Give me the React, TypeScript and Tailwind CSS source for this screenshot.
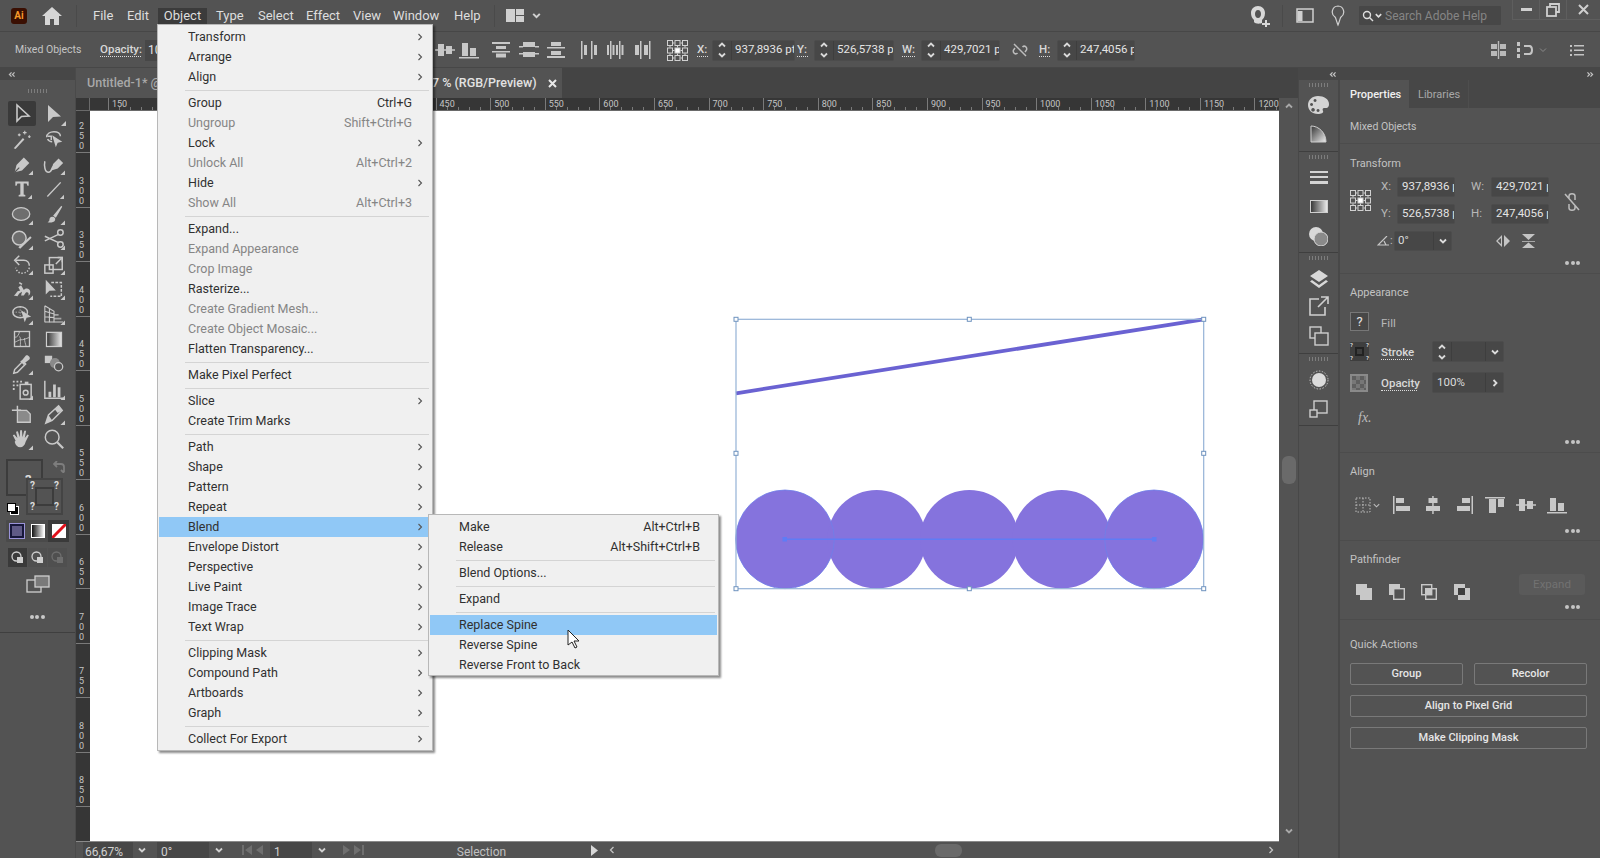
import React from "react";

type P = { children?: React.ReactNode; c?: boolean; s?: number; className?: string };
const Ico = ({ children, c, s = 24, className = "" }: P) => (
  <svg width={s} height={s} viewBox="0 0 24 24" fill="currentColor" className={"shrink-0 " + className}>
    {children}
    {c && <path d="M24 19v5h-5z" />}
  </svg>
);
const St = { fill: "none", stroke: "currentColor", strokeWidth: 1.6 } as const;

const Chev = ({ dir = "down", s = 10, w = 1.8, className = "" }: { dir?: string; s?: number; w?: number; className?: string }) => {
  const d = dir === "down" ? "M2 3.5 5 6.5 8 3.5" : dir === "up" ? "M2 6.5 5 3.5 8 6.5" : dir === "left" ? "M6.5 2 3.5 5 6.5 8" : "M3.5 2 6.5 5 3.5 8";
  return (
    <svg width={s} height={s} viewBox="0 0 10 10" fill="none" stroke="currentColor" strokeWidth={w} className={"shrink-0 " + className}>
      <path d={d} />
    </svg>
  );
};

const tools: [React.ReactNode, React.ReactNode][] = [
  [
    <Ico><path d="M7 3v16l4.500-4.500 7.500-.5z" {...St} /></Ico>,
    <Ico c><path d="M6 3v17l5-5 8-.5z" /></Ico>,
  ],
  [
    <Ico s={22}><path d="M3 22 13 11l1.600 1.600L5 23z" /><path d="M15 3v4M13 5h4M20 8v3M18.500 9.500h3M9 6v3M7.500 7.500h3" {...St} strokeWidth={1.2} /></Ico>,
    <Ico s={22}><path d="M4 10c0-4 4-6 8-6s7 2 7 5" {...St} /><path d="M5 12c1 2 3 3 5 3M5 9h4v4" {...St} /><path d="M10 8l11 7-5 1-2 5z" /></Ico>,
  ],
  [
    <Ico s={22} c><path d="M4 21l2-8 8-8 6 6-8 8z" /><path d="M4 21l5-5" stroke="#535353" strokeWidth="1.200" /></Ico>,
    <Ico s={22} c><path d="M9 19l2-7 6-6 5 5-6 6z" /><path d="M2 9c-1 5 0 12 4 12s3-5 5-6" {...St} /></Ico>,
  ],
  [
    <Ico s={20} c><path d="M4 3h16v5h-1.500l-1-2.500H14v13l2 .7V21H8v-1.800l2-.7v-13H6.500l-1 2.500H4z" /></Ico>,
    <Ico s={20} c><path d="M4 21 20 4" {...St} /></Ico>,
  ],
  [
    <Ico s={22} c><ellipse cx="11" cy="12" rx="9.500" ry="7" fill="#6e6e6e" stroke="currentColor" strokeWidth="1.400" /></Ico>,
    <Ico s={22} c><path d="M11 14 20 3l1 1-7 12zM10 15c3 0 4 2 3 4s-5 3-8 2c2-1 2-2 2-3s1-3 3-3z" /></Ico>,
  ],
  [
    <Ico s={22} c><circle cx="9" cy="11" r="7.500" fill="#6e6e6e" stroke="currentColor" strokeWidth="1.600" /><path d="M8 21l13-12 1.500 1.500L10 22.500z" /></Ico>,
    <Ico s={22} c><circle cx="19" cy="5" r="3" {...St} /><circle cx="19" cy="18" r="3" {...St} /><path d="M2 9l15 7M2 14l15-7" {...St} /></Ico>,
  ],
  [
    <Ico s={22} c><path d="M5 8h9c4 0 6 3 6 6" {...St} /><path d="M9 3 4 8l5 5" {...St} /><path d="M20 16c-1 4-4 6-8 6s-6-3-7-6" {...St} strokeDasharray="1.500 1.800" /></Ico>,
    <Ico s={22} c><rect x="2" y="13" width="9" height="9" {...St} /><rect x="7" y="5" width="14" height="13" {...St} /><path d="M14 12l6-6M16 5h5v5" {...St} /></Ico>,
  ],
  [
    <Ico s={22} c><path d="M3 19c3-1 3-6 7-5l-2-4 3-2 3 5c3-3 7-1 7 2s-1 4-2 4c1-3-1-4-3-3l-2 3h-3l1-4-3 2-2 3z" /><path d="M9 5l3 2" {...St} /></Ico>,
    <Ico s={22} c><path d="M3 2v16l4-4 7-.5z" /><path d="M9 5h11v15H8" {...St} strokeDasharray="3 1.500" /></Ico>,
  ],
  [
    <Ico s={22} c><ellipse cx="10" cy="10" rx="8" ry="6" {...St} /><path d="M2 10h14M10 4v12" {...St} strokeWidth={0.8} strokeDasharray="1.500 1.500" /><path d="M11 8l11 7-5 1-2 5z" /></Ico>,
    <Ico s={22} c><path d="M2 3v18M2 3l10 6v12M2 9l10 3M2 15l10 1M7 6v15" {...St} strokeWidth={1.2} /><path d="M12 12h5v2h-5zM12 16h8v2h-8zM2 20h20v1.500H2z" opacity=".7" /></Ico>,
  ],
  [
    <Ico s={20}><rect x="3" y="3" width="18" height="18" {...St} /><path d="M3 10c4 0 5-3 6-7M9 9c2 3 1 5 1 12M10 13c4 0 6-1 11-3M15 11c0 4 1 6 2 10M3 16c3-1 5-3 7-3" {...St} strokeWidth={1} /></Ico>,
    <Ico s={20}>
      <defs><linearGradient id="tg"><stop offset="0" stopColor="#333" /><stop offset="1" stopColor="#e8e8e8" /></linearGradient></defs>
      <rect x="3" y="4" width="18" height="17" fill="url(#tg)" stroke="#cfcfcf" strokeWidth="1.500" />
    </Ico>,
  ],
  [
    <Ico s={22} c><path d="M3 22l1-4 9-9 3 3-9 9z" {...St} /><path d="M12 8l4-5c2-2 6 2 4 4l-5 4 1 1-2 1-4-4z" /></Ico>,
    <Ico s={22}><rect x="2" y="3" width="8" height="8" /><circle cx="13" cy="11" r="5.500" fill="#8a8a8a" /><circle cx="17" cy="15" r="4.500" fill="#535353" stroke="currentColor" strokeWidth="1.400" /></Ico>,
  ],
  [
    <Ico s={22} c><path d="M2 3h2v2H2zM6 3h2v2H6zM10 3h2v2h-2zM2 7h2v2H2zM6 7h2v2H6zM2 11h2v2H2z" /><path d="M15 4h4v3h-4z" /><rect x="10" y="7" width="12" height="16" {...St} /><circle cx="16" cy="16" r="2.600" {...St} /></Ico>,
    <Ico s={22} c><path d="M2 3v19h20" {...St} /><path d="M6 15h3v6H6zM11 7h3v14h-3zM16 10h3v11h-3z" /></Ico>,
  ],
  [
    <Ico s={22}><path d="M1 8h10M7 3v5" {...St} /><path d="M7 8h10l4 4v9H7z" fill="#8a8a8a" stroke="currentColor" strokeWidth="1.400" /></Ico>,
    <Ico s={22} c><path d="M3 22l3-9L17 3l4 5-11 11z" {...St} /><path d="M6 13l4 6-7 3zM17 3l4 5-5 3-3-4z" /></Ico>,
  ],
  [
    <Ico s={22} c><path d="M5 14 2 8l1.500-1L7 11 5.500 4 7.500 3.500 9.500 10 10 2.500h2l.5 7.500 2-7h2l-1.500 8 3-4 1.500 1-3.500 7c-1 4-3 6-6 6s-5-2-6-6z" /></Ico>,
    <Ico s={22}><circle cx="10" cy="10" r="7.500" {...St} /><path d="M15.500 15.500 22 22" {...St} strokeWidth={2.400} /></Ico>,
  ],
];

const Grip = () => <div className="h-[4px] w-[20px] mx-auto bg-[repeating-linear-gradient(90deg,#7d7d7d_0,#7d7d7d_1px,transparent_1px,transparent_3px)]" />;

const Dots = ({ className = "" }: { className?: string }) => (
  <div className={"flex justify-end gap-[1.500px] pr-[20px] " + className}>
    <span className="w-[4px] h-[4px] rounded-full bg-[#c4c4c4]" />
    <span className="w-[4px] h-[4px] rounded-full bg-[#c4c4c4]" />
    <span className="w-[4px] h-[4px] rounded-full bg-[#c4c4c4]" />
  </div>
);

const RefGrid = ({ s = 21 }: { s?: number }) => (
  <svg width={s} height={s} viewBox="0 0 21 21" fill="none" stroke="#d0d0d0" strokeWidth="1" className="shrink-0">
    {[0, 7.5, 15].map((x) => [0, 7.5, 15].map((y) => <rect key={x + "-" + y} x={x + 0.5} y={y + 0.5} width="5" height="5" fill={x === 7.5 && y === 7.5 ? "#fff" : "none"} />))}
    <path d="M6 3h1.500M13.500 3H15M6 10.500h1.500M13.500 10.500H15M6 18h1.500M13.500 18H15M3 6v1.500M3 13.500V15M10.500 6v1.500M10.500 13.500V15M18 6v1.500M18 13.500V15" />
  </svg>
);

const Al = ({ k, className = "" }: { k: string; className?: string }) => {
  const m: Record<string, string> = {
    left: "M1 1h1.500v18H1zM4 3h8v5H4zM4 11h14v5H4z",
    hcenter: "M9.200 1h1.500v18H9.200zM5.500 3h9v5h-9zM3 11h14v5H3z",
    right: "M17.500 1H19v18h-1.500zM8 3h8v5H8zM3 11h13v5H3z",
    top: "M0 2h20v1.500H0zM4 4h7v14H4zM13 4h6v8h-6z",
    vmid: "M0 9.200h20v1.500H0zM3 4h6v12H3zM11 6h6v8h-6z",
    bottom: "M0 17h20v1.500H0zM3 3h6v13H3zM11 8h6v8h-6z",
    dt: "M1 2h18v2H1zM5 6h10v3H5zM1 11h18v1.500H1zM5 13.500h10v4H5z",
    dm: "M4 2h12v5H4zM0 6h4v1.500H0zM16 6h4v1.500h-4zM4 12h12v5H4zM0 13h4v1.500H0zM16 13h4v1.500h-4z",
    db: "M5 2h10v4H5zM1 7h18v1.500H1zM5 11h10v4H5zM1 16h18v2H1z",
    vl: "M2 1h1.500v18H2zM5 5h3v10H5zM12 1h1.500v18H12zM15 5h3v10h-3z",
    vc: "M5 1h1.500v18H5zM2 5h2v10H2zM7.500 5h2v10h-2zM14 1h1.500v18H14zM11 5h2v10h-2zM16.500 5h2v10h-2z",
    vr: "M8 1h1.500v18H8zM3 5h4v10H3zM17 1h1.500v18H17zM12 5h4v10h-4z",
  };
  return <svg width="20" height="20" viewBox="0 0 20 20" fill="#c8c8c8" className={"shrink-0 " + className}><path d={m[k]} /></svg>;
};

const Stepper = () => (
  <div className="flex flex-col items-center justify-center shrink-0 border-r border-[#3e3e3e] text-[#d8d8d8] h-full w-[19px]">
    <Chev dir="up" s={10} />
    <Chev dir="down" s={10} />
  </div>
);

const NumField = ({ v, cls }: { v: string; cls: string }) => (
  <div className={"flex items-center h-[21px] bg-[#474747] rounded-[2px] overflow-hidden shrink-0 border border-[#4c4c4c] " + cls}>
    <Stepper />
    <span className="pl-[3px] text-[11.5px] text-[#e4e4e4] whitespace-nowrap overflow-hidden">{v}</span>
  </div>
);

const Dotted = ({ children, cls = "" }: { children: React.ReactNode; cls?: string }) => (
  <span className={"border-b border-dotted border-[#dcdcdc] leading-[13px] text-[11.5px] font-medium text-[#d8d8d8] shrink-0 whitespace-nowrap " + cls}>{children}</span>
);

type MI = { t: string; s?: string; a?: boolean; d?: boolean; h?: boolean } | "-";
const mainMenu: MI[] = [
  { t: "Transform", a: true }, { t: "Arrange", a: true }, { t: "Align", a: true }, "-",
  { t: "Group", s: "Ctrl+G" }, { t: "Ungroup", s: "Shift+Ctrl+G", d: true }, { t: "Lock", a: true },
  { t: "Unlock All", s: "Alt+Ctrl+2", d: true }, { t: "Hide", a: true }, { t: "Show All", s: "Alt+Ctrl+3", d: true }, "-",
  { t: "Expand..." }, { t: "Expand Appearance", d: true }, { t: "Crop Image", d: true }, { t: "Rasterize..." },
  { t: "Create Gradient Mesh...", d: true }, { t: "Create Object Mosaic...", d: true }, { t: "Flatten Transparency..." }, "-",
  { t: "Make Pixel Perfect" }, "-",
  { t: "Slice", a: true }, { t: "Create Trim Marks" }, "-",
  { t: "Path", a: true }, { t: "Shape", a: true }, { t: "Pattern", a: true }, { t: "Repeat", a: true }, { t: "Blend", a: true, h: true },
  { t: "Envelope Distort", a: true }, { t: "Perspective", a: true }, { t: "Live Paint", a: true }, { t: "Image Trace", a: true }, { t: "Text Wrap", a: true }, "-",
  { t: "Clipping Mask", a: true }, { t: "Compound Path", a: true }, { t: "Artboards", a: true }, { t: "Graph", a: true }, "-",
  { t: "Collect For Export", a: true },
];
const subMenu: MI[] = [
  { t: "Make", s: "Alt+Ctrl+B" }, { t: "Release", s: "Alt+Shift+Ctrl+B" }, "-", { t: "Blend Options..." }, "-", { t: "Expand" }, "-",
  { t: "Replace Spine", h: true }, { t: "Reverse Spine" }, { t: "Reverse Front to Back" },
];

const Menu = ({ items, cls, textPl, rightPr }: { items: MI[]; cls: string; textPl: string; rightPr: string }) => (
  <div className={"absolute bg-[#f0f0f0] border border-[#b8b8b8] shadow-[2px_2px_2px_rgba(0,0,0,0.45)] pt-[2px] pb-[1px] px-[1px] text-[12.5px] " + cls}>
    {items.map((m, i) =>
      m === "-" ? (
        <div key={i} className="h-[6px] flex items-center pl-[26px] pr-[2px]"><div className="h-[1px] w-full bg-[#d4d4d4]" /></div>
      ) : (
        <div key={i} className={"h-[20px] flex items-center " + textPl + " " + (m.h ? "bg-[#90c8f6] " : "") + (m.d ? "text-[#858585]" : "text-[#303030]")}>
          <span className="whitespace-nowrap">{m.t}</span>
          <span className={"ml-auto whitespace-nowrap " + rightPr}>{m.s}</span>
          {m.a && <Chev dir="right" s={10} w={1.1} className="text-[#555] mr-[6px]" />}
        </div>
      )
    )}
  </div>
);

const hr = [150, 200, 250, 300, 350, 400, 450, 500, 550, 600, 650, 700, 750, 800, 850, 900, 950, 1000, 1050, 1100, 1150, 1200];
const vr = [300, 350, 400, 450, 500, 550, 600, 650, 700, 750, 800, 850];

const Btn = ({ children, cls = "" }: { children: React.ReactNode; cls?: string }) => (
  <div className={"h-[22px] flex items-center justify-center border border-[#797979] rounded-[2px] text-[11px] font-medium text-[#e6e6e6] " + cls}>{children}</div>
);

const PanelLabel = ({ children, cls = "" }: { children: React.ReactNode; cls?: string }) => (
  <div className={"h-[14px] leading-[14px] text-[11px] text-[#c2c2c2] pl-[10px] " + cls}>{children}</div>
);

const PField = ({ v }: { v: string }) => (
  <div className="w-[58px] h-[20px] bg-[#474747] rounded-[2px] border border-[#4c4c4c] flex items-center pl-[4px] text-[11.5px] text-[#e4e4e4] overflow-hidden whitespace-nowrap shrink-0">{v}</div>
);

const Q = ({ cls }: { cls: string }) => <span className={"text-[10px] font-bold text-[#dcdcdc] leading-none absolute " + cls}>?</span>;

export default function App() {
  return (
    <div className="relative w-[1600px] h-[858px] overflow-hidden flex flex-col bg-[#535353] select-none font-['Roboto','Noto_Sans',sans-serif]">
      {/* Menu bar */}
      <div className="h-[32px] shrink-0 flex items-center bg-[#535353] border-b border-[#474747] text-[13px] text-[#dedede]">
        <div className="ml-[11px] w-[16px] h-[16px] rounded-[3px] bg-[#3a0f02] flex items-center justify-center text-[10px] font-bold text-[#f79a2a] leading-none">Ai</div>
        <svg width="20" height="18" viewBox="0 0 20 18" fill="#d6d6d6" className="ml-[15px] shrink-0"><path d="M10 0 20 9h-3v9h-5v-6H8v6H3V9H0z" /></svg>
        <div className="ml-[14px] w-px h-[22px] bg-[#4a4a4a]" />
        <span className="ml-[16px] w-[34px] shrink-0">File</span>
        <span className="w-[31px] shrink-0">Edit</span>
        <span className="h-[16px] leading-[16px] w-[49px] shrink-0 bg-[#3b3b3b] text-center">Object</span>
        <span className="ml-[9px] w-[42px] shrink-0">Type</span>
        <span className="w-[48px] shrink-0">Select</span>
        <span className="w-[47px] shrink-0">Effect</span>
        <span className="w-[40px] shrink-0">View</span>
        <span className="w-[61px] shrink-0">Window</span>
        <span className="w-[40px] shrink-0">Help</span>
        <div className="w-px h-[22px] bg-[#4a4a4a]" />
        <svg width="18" height="13" viewBox="0 0 18 13" fill="#d0d0d0" className="ml-[11px] shrink-0"><path d="M0 0h9v13H0zM10 0h8v6h-8zM10 7h8v6h-8z" /></svg>
        <Chev s={11} className="ml-[7px] text-[#d0d0d0]" />
        <div className="ml-auto flex items-center h-full">
          <svg width="22" height="22" viewBox="0 0 22 22" fill="#d8d8d8" className="shrink-0"><path d="M9 1c4 0 7 3 7 7s-2 6-3 7v3c-2 1-7 1-8-1v-2C3 13 2 11 2 8c0-4 3-7 7-7zm0 4c-2 0-3 2-3 4s1 4 3 4 3-2 3-4-1-4-3-4z" /><path d="M16 15h2v3h3v2h-3v2h-2v-2h-3v-2h3z" /></svg>
          <div className="ml-[11px] w-px h-[22px] bg-[#4a4a4a]" />
          <svg width="18" height="15" viewBox="0 0 18 15" fill="none" stroke="#d0d0d0" strokeWidth="1.500" className="ml-[13px] shrink-0"><rect x="1" y="1" width="16" height="13" /><rect x="1.5" y="3" width="5" height="10" fill="#d0d0d0" stroke="none" /></svg>
          <svg width="14" height="22" viewBox="0 0 14 22" fill="none" stroke="#d0d0d0" strokeWidth="1.200" className="ml-[17px] shrink-0"><path d="M7 1a6 6 0 0 0-3 11c1 1 1 3 3 8 2-5 2-7 3-8A6 6 0 0 0 7 1z" /></svg>
          <div className="ml-[14px] w-[142px] h-[19px] bg-[#474747] rounded-[1px] flex items-center pl-[3px] text-[12px] text-[#858585]">
            <svg width="12" height="12" viewBox="0 0 12 12" fill="none" stroke="#dedede" strokeWidth="1.400" className="shrink-0"><circle cx="5" cy="5" r="3.500" /><path d="M7.500 7.500 11 11" /></svg>
            <Chev s={9} className="text-[#dedede]" />
            <span className="ml-[2px] whitespace-nowrap">Search Adobe Help</span>
          </div>
          <div className="ml-[11px] flex h-[20px] self-start text-[#cfcfcf] border-b border-[#5e5e5e]">
            <div className="w-[28px] flex items-center justify-center border-x border-[#5e5e5e]"><span className="w-[11px] h-[3px] bg-[#cfcfcf]" /></div>
            <div className="w-[27px] flex items-center justify-center border-r border-[#5e5e5e]"><svg width="14" height="14" viewBox="0 0 14 14" fill="none" stroke="#cfcfcf" strokeWidth="1.800"><path d="M4 4V1h9v8h-3" /><rect x="1" y="4" width="9" height="9" /></svg></div>
            <div className="w-[33px] flex items-center justify-center"><svg width="11" height="11" viewBox="0 0 11 11" stroke="#cfcfcf" strokeWidth="2"><path d="M1 1l9 9M10 1l-9 9" /></svg></div>
          </div>
        </div>
      </div>

      {/* Control bar */}
      <div className="h-[36px] shrink-0 flex items-center pt-[1px] bg-[#535353] border-b border-[#474747] text-[12px] text-[#c8c8c8]">
        <span className="ml-[15px] w-[66px] text-[10.5px] whitespace-nowrap text-[#c4c4c4]">Mixed Objects</span>
        <Dotted cls="ml-[19px] w-[41px]">Opacity:</Dotted>
        <div className="ml-[4px] w-[50px] h-[21px] bg-[#474747] pl-[3px] text-[#e4e4e4] leading-[21px] shrink-0">100%</div>
        <div className="w-[240px] shrink-0" />
        <Al k="vmid" /><Al k="bottom" className="ml-[4px]" />
        <Al k="dt" className="ml-[12px]" /><Al k="dm" className="ml-[8px]" /><Al k="db" className="ml-[7px]" />
        <Al k="vl" className="ml-[13px]" /><Al k="vc" className="ml-[6px]" /><Al k="vr" className="ml-[7px]" />
        <div className="ml-[15px]"><RefGrid /></div>
        <Dotted cls="ml-[9px] w-[11px]">X:</Dotted>
        <NumField v="937,8936 pt" cls="ml-[4px] w-[83px]" />
        <Dotted cls="ml-[2px] w-[11px]">Y:</Dotted>
        <NumField v="526,5738 pt" cls="ml-[6px] w-[80px]" />
        <Dotted cls="ml-[8px] w-[13px]">W:</Dotted>
        <NumField v="429,7021 pt" cls="ml-[6px] w-[79px]" />
        <svg width="16" height="16" viewBox="0 0 16 16" fill="none" stroke="#bdbdbd" strokeWidth="1.500" className="ml-[12px] shrink-0"><path d="M2 2l12 12M3 6 1.500 8c-1 3 2 5 4 3M13 10l1.500-2c1-3-2-5-4-3" /></svg>
        <Dotted cls="ml-[11px] w-[11px]">H:</Dotted>
        <NumField v="247,4056 pt" cls="ml-[7px] w-[78px]" />
        <div className="ml-auto flex items-center pr-[16px] text-[#c8c8c8]">
          <svg width="15" height="18" viewBox="0 0 15 18" fill="#c4c4c4" className="shrink-0"><path d="M0 3h6v5H0zM9 3h6v5H9zM0 10h6v5H0zM9 10h6v5H9zM6.800 0h1.400v18H6.800z" opacity=".9" /></svg>
          <svg width="18" height="18" viewBox="0 0 18 18" fill="#c4c4c4" className="ml-[11px] shrink-0"><path d="M0 1h3v4H0zM0 7h3v4H0zM0 13h3v4H0z" /><path d="M7 4h5c3 0 4 2 4 5s-1 5-4 5H7v-2h5c1 0 2-1 2-3s-1-3-2-3H7z" /></svg>
          <Chev s={10} w={1} className="ml-[3px] text-[#8a8a8a]" />
          <svg width="14" height="13" viewBox="0 0 14 13" fill="#c4c4c4" className="ml-[22px] shrink-0"><path d="M0 1h2v2H0zM4 1h10v1.500H4zM0 5.500h2v2H0zM4 5.500h10V7H4zM0 10h2v2H0zM4 10h10v1.500H4z" /></svg>
        </div>
      </div>

      {/* Main */}
      <div className="flex-1 flex min-h-0">
        {/* Tools */}
        <div className="w-[76px] shrink-0 flex flex-col bg-[#535353] border-r border-[#4a4a4a] text-[#c9c9c9]">
          <div className="h-[12px] bg-[#474747] flex items-center pl-[7px] text-[#bdbdbd] shrink-0"><Chev dir="left" s={7} /><Chev dir="left" s={7} className="-ml-[4px]" /></div>
          <div className="h-[21px] flex items-center shrink-0"><Grip /></div>
          <div className="grid grid-cols-2 w-[64px] ml-[6px] shrink-0">
            {tools.flat().map((t, i) => (
              <div key={i} className={"h-[25px] flex items-center justify-center " + (i === 0 ? "bg-[#3a3a3a] rounded-[2px] mx-[2px] " : "")}>{t}</div>
            ))}
          </div>
          {/* Fill & stroke */}
          <div className="relative h-[63px] mt-[6px] shrink-0">
            <div className="absolute left-[6px] top-[2px] w-[37px] h-[37px] border-2 border-[#3c3c3c]"><Q cls="left-[17px] top-[12px] !text-[13px]" /></div>
            <div className="absolute left-[26px] top-[21px] w-[37px] h-[37px] bg-[#535353] border-2 border-[#444] flex items-center justify-center">
              <div className="w-[19px] h-[19px] border-2 border-[#3c3c3c]" />
              <Q cls="left-[2px] top-[1px]" /><Q cls="right-[2px] top-[1px]" /><Q cls="left-[2px] bottom-[1px]" /><Q cls="right-[2px] bottom-[1px]" />
            </div>
            <svg width="12" height="12" viewBox="0 0 12 12" fill="none" stroke="#7d7d7d" strokeWidth="1.800" className="absolute left-[53px] top-[4px]"><path d="M1 3h7c2 0 3 1 3 3v5M4 0 1 3l3 3M8 9l3 3" /></svg>
            <div className="absolute left-[10px] top-[49px] w-[9px] h-[9px] bg-black border border-white" />
            <div className="absolute left-[7px] top-[46px] w-[9px] h-[9px] bg-white border border-black" />
          </div>
          <div className="flex ml-[6px] h-[22px] items-center shrink-0 bg-[#4a4a4a] w-[63px] rounded-[1px]">
            <div className="w-[21px] h-[22px] flex items-center justify-center"><div className="w-[14px] h-[14px] bg-[#5f5a86] border-2 border-[#17173a] outline outline-1 outline-[#9a93d8]" /></div>
            <div className="w-[21px] h-[22px] flex items-center justify-center"><div className="w-[14px] h-[14px] bg-[linear-gradient(90deg,#111,#fff)] border border-white" /></div>
            <div className="w-[21px] h-[22px] flex items-center justify-center bg-[#3a3a3a]"><svg width="14" height="14" viewBox="0 0 14 14"><rect width="14" height="14" fill="#fff" /><path d="M0 14 14 0" stroke="#e0101a" strokeWidth="3" /></svg></div>
          </div>
          <div className="flex ml-[8px] mt-[6px] shrink-0 w-[60px] h-[19px] gap-px">
            {[0, 1, 2].map((i) => (
              <div key={i} className={"w-[19px] h-[19px] flex items-center justify-center " + (i === 0 ? "bg-[#3a3a3a]" : "bg-[#4f4f4f]")}>
                <svg width="13" height="13" viewBox="0 0 13 13" fill="none" stroke={i === 2 ? "#6e6e6e" : "#cfcfcf"} strokeWidth="1.300"><circle cx="5.500" cy="5.500" r="4.500" /><path d="M6 6h6v6H6z" fill={i === 2 ? "#6e6e6e" : "#cfcfcf"} stroke="none" /></svg>
              </div>
            ))}
          </div>
          <svg width="24" height="18" viewBox="0 0 24 18" fill="none" stroke="#cfcfcf" strokeWidth="1.300" className="ml-[26px] mt-[8px] shrink-0"><rect x="1" y="5" width="14" height="12" /><rect x="9" y="1" width="14" height="11" fill="#7a7a7a" /></svg>
          <div className="mt-[22px] flex justify-center gap-[1.500px] pr-[1px] shrink-0"><span className="w-[4px] h-[4px] rounded-full bg-[#c9c9c9]" /><span className="w-[4px] h-[4px] rounded-full bg-[#c9c9c9]" /><span className="w-[4px] h-[4px] rounded-full bg-[#c9c9c9]" /></div>
          <div className="mt-[13px] h-px bg-[#3f3f3f] shrink-0" />
        </div>

        {/* Centre */}
        <div className="w-[1222px] shrink-0 flex flex-col">
          <div className="h-[30px] shrink-0 bg-[#444444] flex">
            <div className="w-[486px] bg-[#535353] flex items-center pl-[11px] text-[12.5px] font-medium text-[#e2e2e2] whitespace-nowrap overflow-hidden">
              <span className="text-[#a8a8a8] w-[345px] shrink-0">Untitled-1* @</span>
              <span className="shrink-0">7 % (RGB/Preview)</span>
              <svg width="9" height="9" viewBox="0 0 9 9" stroke="#e8e8e8" strokeWidth="2" className="ml-[11px] shrink-0"><path d="M1 1l7 7M8 1 1 8" /></svg>
            </div>
          </div>
          <div className="flex-1 flex min-h-0">
            <div className="w-[1203px] shrink-0 flex flex-col">
              {/* H ruler */}
              <div className="h-[13px] shrink-0 flex bg-[#363636] border-b border-[#6a6a6a]">
                <div className="w-[14px] shrink-0 border-r border-[#6a6a6a]" />
                <div className="flex-1 flex overflow-hidden pl-[18px]">
                  {hr.map((n) => (
                    <div key={n} className="relative w-[54.6px] shrink-0 border-l border-[#7a7a7a] pl-[3px] text-[9px] leading-[12px] text-[#c4c4c4]">
                      {n}
                      <svg width="54" height="3" className="absolute left-0 bottom-0" stroke="#7a7a7a"><path d="M10.500 0v3M21.500 0v3M32.500 0v3M43.500 0v3" /></svg>
                    </div>
                  ))}
                </div>
              </div>
              <div className="flex-1 flex min-h-0">
                {/* V ruler */}
                <div className="w-[14px] shrink-0 bg-[#363636] flex flex-col overflow-hidden">
                  <div className="h-[42px] shrink-0 flex flex-col justify-end border-b border-[#7a7a7a] text-[9px] leading-[10px] text-[#c4c4c4] pl-[3px] pb-[1px]"><span>2</span><span>5</span><span>0</span></div>
                  {vr.map((n) => (
                    <div key={n} className="h-[54.5px] shrink-0 flex flex-col justify-end border-b border-[#7a7a7a] text-[9px] leading-[10px] text-[#c4c4c4] pl-[3px] pb-[1px]">
                      {String(n).split("").map((d, i) => <span key={i}>{d}</span>)}
                    </div>
                  ))}
                </div>
                {/* Canvas */}
                <div className="relative flex-1 bg-white overflow-hidden">
                  <svg width="1189" height="730" viewBox="90 111 1189 730" className="absolute left-0 top-0">
                    {[785, 876.7, 969.3, 1061.7, 1154].map((cx) => (
                      <circle key={cx} cx={cx} cy="539.3" r="49.3" fill="#8573dd" />
                    ))}
                    <circle cx="785" cy="539.3" r="49.3" fill="none" stroke="#6f7fe8" strokeWidth=".8" />
                    <circle cx="1154" cy="539.3" r="49.3" fill="none" stroke="#6f7fe8" strokeWidth=".8" />
                    <path d="M785 539.3H1154" stroke="#5f7cf5" strokeWidth="1.5" />
                    <rect x="782.5" y="537" width="4.5" height="4.5" fill="#5f7cf5" />
                    <rect x="1152" y="537" width="4.5" height="4.5" fill="#5f7cf5" />
                    <path d="M736 393.3 1203.7 319.3" stroke="#6a62d2" strokeWidth="3.8" />
                    <rect x="736" y="319.3" width="467.7" height="269.4" fill="none" stroke="#94b2d6" strokeWidth="1.2" />
                    {[[736, 319.3], [969.3, 319.3], [1203.7, 319.3], [736, 453.3], [1203.7, 453.3], [736, 588.7], [969.3, 588.7], [1203.7, 588.7]].map(([x, y]) => (
                      <rect key={x + "-" + y} x={x - 2} y={y - 2} width="4" height="4" fill="#fff" stroke="#6f93bf" strokeWidth="1" />
                    ))}
                  </svg>
                </div>
              </div>
              {/* Status bar */}
              <div className="h-[17px] shrink-0 flex items-center overflow-hidden bg-[#535353] border-t border-[#8a8a8a] text-[12px] text-[#d0d0d0]">
                <div className="ml-[7px] w-[50px] h-full bg-[#474747] pl-[2px] leading-[20px] whitespace-nowrap shrink-0">66,67%</div>
                <div className="w-[17px] flex justify-center shrink-0"><Chev /></div>
                <div className="ml-[7px] w-[52px] h-full bg-[#474747] pl-[4px] leading-[20px] shrink-0">0°</div>
                <div className="w-[20px] flex justify-center shrink-0"><Chev /></div>
                <div className="ml-[6px] w-[35px] flex items-center justify-center gap-[4px] text-[#6f6f6f] shrink-0">
                  <svg width="10" height="10" viewBox="0 0 10 10" fill="currentColor"><path d="M0 0h2v10H0zM10 0v10L3 5z" /></svg>
                  <svg width="7" height="10" viewBox="0 0 7 10" fill="currentColor"><path d="M7 0v10L0 5z" /></svg>
                </div>
                <div className="w-[42px] h-full bg-[#474747] pl-[4px] leading-[20px] shrink-0">1</div>
                <div className="w-[20px] flex justify-center shrink-0"><Chev /></div>
                <div className="ml-[2px] w-[38px] flex items-center justify-center gap-[4px] text-[#6f6f6f] shrink-0">
                  <svg width="7" height="10" viewBox="0 0 7 10" fill="currentColor"><path d="M0 0v10l7-5z" /></svg>
                  <svg width="10" height="10" viewBox="0 0 10 10" fill="currentColor"><path d="M8 0h2v10H8zM0 0v10l7-5z" /></svg>
                </div>
                <div className="w-[219px] h-full leading-[20px] text-center text-[#c0c0c0] shrink-0">Selection</div>
                <svg width="7" height="11" viewBox="0 0 7 11" fill="#d8d8d8" className="shrink-0"><path d="M0 0v11l7-5.500z" /></svg>
                <Chev dir="left" s={10} w={1.3} className="ml-[9px] text-[#c4c4c4]" />
                <div className="ml-[318px] w-[27px] h-[13px] bg-[#6a6a6a] rounded-[6px] shrink-0" />
                <Chev dir="right" s={10} w={1.3} className="ml-[304px] text-[#c4c4c4]" />
              </div>
            </div>
            {/* V scroll */}
            <div className="w-[19px] shrink-0 flex flex-col items-center bg-[#535353] text-[#a8a8a8]">
              <Chev dir="up" s={10} className="mt-[3px]" />
              <div className="mt-[345px] w-[14px] h-[28px] rounded-[6px] bg-[#6a6a6a]" />
              <Chev dir="down" s={10} className="mt-[342px]" />
            </div>
          </div>
        </div>

        {/* Right */}
        <div className="flex-1 flex flex-col min-w-0 bg-[#535353]">
          <div className="h-[12px] shrink-0 bg-[#474747] flex items-center justify-between text-[#c4c4c4]">
            <div className="flex ml-[30px] items-center"><Chev dir="left" s={7} /><Chev dir="left" s={7} className="-ml-[4px]" /></div>
            <div className="flex mr-[5px] items-center"><Chev dir="right" s={7} /><Chev dir="right" s={7} className="-ml-[4px]" /></div>
          </div>
          <div className="flex-1 flex min-h-0">
            {/* Dock */}
            <div className="w-[42px] shrink-0 flex flex-col items-center bg-[#535353] border-l border-[#484848] border-r-2 border-r-[#484848] text-[#cfcfcf]">
              <div className="h-[72px] w-full border-b border-[#3f3f3f] shrink-0 flex flex-col items-center">
                <div className="h-[10px] flex items-center w-full"><Grip /></div>
                <svg width="21" height="18" viewBox="0 0 21 18" fill="#d4d4d4" className="mt-[6px]"><path fillRule="evenodd" d="M10 0c6 0 11 3 11 8s-4 4-5 4-2 1-1 3-2 3-5 3C4 18 0 14 0 9s4-9 10-9zM7 3a1.500 1.500 0 1 0 .1 0zM3.500 7a1.500 1.500 0 1 0 .1 0zM5 12a1.800 1.800 0 1 0 .1 0zM10 13a1.500 1.500 0 1 0 .1 0z" /></svg>
                <svg width="17" height="18" viewBox="0 0 17 18" className="mt-[11px]"><defs><linearGradient id="dg" x1="0" y1="0" x2="1" y2="1"><stop offset="0" stopColor="#333" /><stop offset="1" stopColor="#eee" /></linearGradient></defs><path d="M1 1c8 0 15 7 15 16H1z" fill="url(#dg)" stroke="#cfcfcf" /></svg>
              </div>
              <div className="h-[101px] w-full border-b border-[#3f3f3f] shrink-0 flex flex-col items-center">
                <div className="h-[10px] flex items-center w-full"><Grip /></div>
                <svg width="18" height="13" viewBox="0 0 18 13" fill="#d4d4d4" className="mt-[9px]"><path d="M0 0h18v2H0zM0 5h18v2H0zM0 10h18v3H0z" /></svg>
                <svg width="18" height="13" viewBox="0 0 18 13" className="mt-[16px]"><defs><linearGradient id="dh"><stop offset="0" stopColor="#333" /><stop offset="1" stopColor="#eee" /></linearGradient></defs><rect x=".5" y=".5" width="17" height="12" fill="url(#dh)" stroke="#cfcfcf" /></svg>
                <svg width="19" height="19" viewBox="0 0 19 19" className="mt-[14px]"><circle cx="7" cy="7" r="7" fill="#d8d8d8" /><circle cx="12" cy="12" r="7" fill="#8a8a8a" stroke="#d8d8d8" /></svg>
              </div>
              <div className="h-[101px] w-full border-b border-[#3f3f3f] shrink-0 flex flex-col items-center">
                <div className="h-[10px] flex items-center w-full"><Grip /></div>
                <svg width="18" height="18" viewBox="0 0 18 18" fill="#d8d8d8" className="mt-[7px]"><path d="M9 0l9 6-9 6-9-6zM2 10l7 5 7-5 2 1.500L9 18l-9-6.500z" /></svg>
                <svg width="20" height="20" viewBox="0 0 20 20" fill="none" stroke="#cfcfcf" strokeWidth="1.600" className="mt-[8px]"><path d="M10 3H1v16h15v-8M9 11 19 1M12 1h7v7" /></svg>
                <svg width="20" height="20" viewBox="0 0 20 20" fill="none" stroke="#cfcfcf" strokeWidth="1.400" className="mt-[10px]"><rect x="1" y="1" width="11" height="11" /><rect x="6" y="7" width="13" height="12" fill="#535353" /></svg>
              </div>
              <div className="w-full border-b border-[#3f3f3f] h-[72px] shrink-0 flex flex-col items-center">
                <div className="h-[10px] flex items-center w-full"><Grip /></div>
                <svg width="20" height="20" viewBox="0 0 20 20" className="mt-[6px]"><circle cx="10" cy="10" r="9" fill="none" stroke="#c8c8c8" strokeDasharray="1.500 1.500" /><circle cx="10" cy="10" r="7" fill="#dcdcdc" /></svg>
                <svg width="19" height="18" viewBox="0 0 19 18" fill="none" stroke="#cfcfcf" strokeWidth="1.400" className="mt-[10px]"><rect x="5" y="1" width="13" height="12" /><rect x="1" y="10" width="7" height="7" fill="#535353" /></svg>
              </div>
            </div>
            {/* Properties */}
            <div className="flex-1 flex flex-col min-w-0">
              <div className="h-[28px] shrink-0 flex bg-[#474747] text-[11px]">
                <div className="w-[69px] bg-[#535353] flex items-center pl-[10px] pt-[2px] font-medium text-[#f0f0f0]">Properties</div>
                <div className="w-[60px] flex items-center pl-[9px] pt-[2px] text-[#a8a8a8] border-r border-[#4e4e4e]">Libraries</div>
              </div>
              <div className="h-[36px] shrink-0 flex items-center pt-[3px] border-b border-[#4c4c4c]"><PanelLabel cls="!text-[10.5px]">Mixed Objects</PanelLabel></div>

              {/* Transform */}
              <div className="h-[130px] shrink-0 flex flex-col border-b border-[#4c4c4c]">
                <PanelLabel cls="mt-[13px]">Transform</PanelLabel>
                <div className="flex mt-[6px]">
                  <div className="ml-[10px] mt-[13px]"><RefGrid /></div>
                  <div className="ml-[10px] grid grid-cols-[16px_58px_16px_20px_58px] grid-rows-[20px_20px] gap-y-[7px] text-[11.5px] text-[#b8b8b8] items-center">
                    <span>X:</span><PField v="937,8936 pt" /><span /><span>W:</span><PField v="429,7021 pt" />
                    <span>Y:</span><PField v="526,5738 pt" /><span /><span>H:</span><PField v="247,4056 pt" />
                  </div>
                  <svg width="16" height="20" viewBox="0 0 16 20" fill="none" stroke="#bdbdbd" strokeWidth="1.500" className="ml-[15px] mt-[15px] shrink-0"><path d="M1 2 15 18M5 6V4c0-3 6-3 6 0v4M11 14v2c0 3-6 3-6 0v-4" /></svg>
                </div>
                <div className="flex items-center mt-[7px] h-[20px]">
                  <svg width="12" height="10" viewBox="0 0 12 10" fill="none" stroke="#c8c8c8" strokeWidth="1.200" className="ml-[37px] shrink-0"><path d="M10 0 1 9h11M7 5l2 4" /></svg>
                  <span className="text-[11px] text-[#bdbdbd] ml-[1px] w-[4px]">:</span>
                  <div className="w-[58px] h-[20px] bg-[#474747] rounded-[2px] border border-[#4c4c4c] flex items-center text-[11.5px] text-[#dcdcdc] shrink-0">
                    <span className="w-[38px] pl-[3px]">0°</span>
                    <span className="flex-1 h-full border-l border-[#3f3f3f] flex items-center justify-center"><Chev /></span>
                  </div>
                  <svg width="14" height="12" viewBox="0 0 14 12" fill="#c4c4c4" className="ml-[44px] shrink-0"><path fillRule="evenodd" d="M6 0v12L0 6zM5 3 1.800 6 5 9zM8 0v12l6-6z" /></svg>
                  <svg width="13" height="14" viewBox="0 0 13 14" fill="#c4c4c4" className="ml-[12px] shrink-0"><path d="M0 0h13L6.500 6zM0 7h13v.8H0zM6.500 8.500 13 14H0z" /></svg>
                </div>
                <Dots className="mt-[10px]" />
              </div>

              {/* Appearance */}
              <div className="h-[179px] shrink-0 flex flex-col border-b border-[#4c4c4c]">
                <PanelLabel cls="mt-[12px]">Appearance</PanelLabel>
                <div className="flex items-center mt-[12px] h-[19px] ml-[10px] text-[11.5px] text-[#b8b8b8]">
                  <div className="w-[19px] h-[19px] border border-[#777] bg-[#474747] flex items-center justify-center text-[13px] text-[#e4e4e4]">?</div>
                  <span className="ml-[12px] mt-[5px]">Fill</span>
                </div>
                <div className="flex items-center mt-[10px] h-[21px] ml-[10px]">
                  <div className="w-[19px] h-[19px] bg-[#3e3e3e] relative flex items-center justify-center shrink-0"><div className="w-[9px] h-[9px] border-2 border-[#222]" /><Q cls="left-0 top-0 !text-[6px]" /><Q cls="right-0 top-0 !text-[6px]" /><Q cls="left-0 bottom-0 !text-[6px]" /><Q cls="right-0 bottom-0 !text-[6px]" /></div>
                  <Dotted cls="ml-[12px] w-[31px] mt-[2px]">Stroke</Dotted>
                  <div className="ml-[20px] w-[72px] h-[21px] flex bg-[#474747] rounded-[2px] border border-[#4c4c4c] text-[#dcdcdc]">
                    <Stepper />
                    <div className="w-[34px] border-r border-[#3e3e3e]" />
                    <div className="flex-1 flex items-center justify-center"><Chev /></div>
                  </div>
                </div>
                <div className="flex items-center mt-[10px] h-[21px] ml-[10px]">
                  <div className="w-[18px] h-[18px] border-2 border-[#8a8a8a] bg-[repeating-conic-gradient(#777_0_25%,#5f5f5f_0_50%)] bg-[length:8px_8px] shrink-0" />
                  <Dotted cls="ml-[13px] w-[36px] mt-[2px]">Opacity</Dotted>
                  <div className="ml-[15px] w-[72px] h-[21px] flex items-center bg-[#474747] rounded-[2px] border border-[#4c4c4c] text-[#dcdcdc] text-[11.5px]">
                    <span className="w-[53px] pl-[4px] h-full leading-[18px] border-r border-[#3e3e3e]">100%</span>
                    <div className="flex-1 flex items-center justify-center"><Chev dir="right" /></div>
                  </div>
                </div>
                <div className="ml-[18px] mt-[14px] h-[20px] text-[14px] italic font-['Liberation_Serif',serif] text-[#bdbdbd]">fx.</div>
                <Dots className="mt-[13px]" />
              </div>

              {/* Align */}
              <div className="h-[88px] shrink-0 flex flex-col border-b border-[#4c4c4c]">
                <PanelLabel cls="mt-[12px]">Align</PanelLabel>
                <div className="flex items-center mt-[16px] h-[20px]">
                  <svg width="17" height="16" viewBox="0 0 17 16" fill="none" stroke="#bdbdbd" strokeDasharray="1.500 1.500" className="ml-[15px] shrink-0"><rect x="1" y="1" width="14" height="14" /><path d="M8 1v14M1 8h14" /></svg>
                  <Chev s={9} w={1.2} className="text-[#bdbdbd]" />
                  <Al k="left" className="ml-[11px]" /><Al k="hcenter" className="ml-[11px]" /><Al k="right" className="ml-[11px]" /><Al k="top" className="ml-[11px]" /><Al k="vmid" className="ml-[11px]" /><Al k="bottom" className="ml-[11px]" />
                </div>
                <Dots className="mt-[14px]" />
              </div>

              {/* Pathfinder */}
              <div className="h-[79px] shrink-0 flex flex-col border-b border-[#4c4c4c]">
                <PanelLabel cls="mt-[12px]">Pathfinder</PanelLabel>
                <div className="flex items-center mt-[7px] h-[21px]">
                  {[0, 1, 2, 3].map((i) => (
                    <svg key={i} width="16" height="16" viewBox="0 0 16 16" className={"shrink-0 translate-y-[7px] " + (i === 0 ? "ml-[16px]" : "ml-[16.5px]")}>
                      {i === 0 && <path d="M0 0h11v4h5v12H4v-5H0z" fill="#c8c8c8" />}
                      {i === 1 && <><path d="M0 0h11v4H4v7H0z" fill="#c8c8c8" /><rect x="4.7" y="4.7" width="10.6" height="10.6" fill="none" stroke="#c8c8c8" strokeWidth="1.4" /></>}
                      {i === 2 && <><rect x=".7" y=".7" width="10" height="10" fill="none" stroke="#c8c8c8" strokeWidth="1.4" /><rect x="4.7" y="4.7" width="10.6" height="10.6" fill="none" stroke="#c8c8c8" strokeWidth="1.4" /><rect x="4.7" y="4.7" width="6" height="6" fill="#c8c8c8" /></>}
                      {i === 3 && <><path d="M0 0h11v4H4v7H0zM11 4h5v12H4v-5h7z" fill="#c8c8c8" /><rect x="4" y="4" width="7" height="7" fill="#3e3e3e" /></>}
                    </svg>
                  ))}
                  <div className="ml-auto mr-[15px] w-[66px] h-[21px] rounded-[3px] bg-[#5a5a5a] flex items-center justify-center text-[11.5px] text-[#727272]">Expand</div>
                </div>
                <Dots className="mt-[10px]" />
              </div>

              {/* Quick */}
              <PanelLabel cls="mt-[18px]">Quick Actions</PanelLabel>
              <div className="ml-[10px] mr-[13px] mt-[11px] flex flex-col gap-[10px]">
                <div className="flex gap-[11px]"><Btn cls="flex-1">Group</Btn><Btn cls="flex-1">Recolor</Btn></div>
                <Btn>Align to Pixel Grid</Btn>
                <Btn>Make Clipping Mask</Btn>
              </div>
            </div>
          </div>
        </div>
      </div>

      {/* Menus */}
      <Menu items={mainMenu} cls="left-[157px] top-[24px] w-[276px] h-[727px]" textPl="pl-[29px]" rightPr="pr-[19px]" />
      <Menu items={subMenu} cls="left-[428px] top-[514px] w-[291px] h-[162px]" textPl="pl-[29px]" rightPr="pr-[17px]" />
      <svg width="14" height="20" viewBox="0 0 14 20" className="absolute left-[567px] top-[629px]"><path d="M1 1v15l4-3 3 6 2-1-3-6h5z" fill="#fff" stroke="#222" strokeWidth="1" /></svg>
    </div>
  );
}
